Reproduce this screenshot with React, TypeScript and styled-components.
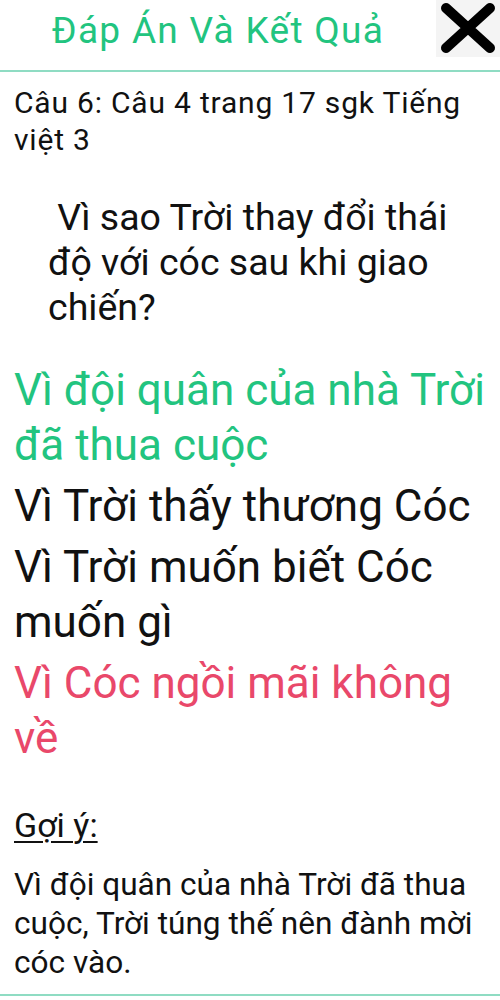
import React from "react";
import styled, { createGlobalStyle } from "styled-components";

const GlobalStyle = createGlobalStyle`
  html, body {
    margin: 0;
    padding: 0;
    background: #ffffff;
  }
  body {
    font-family: Roboto, "Liberation Sans", "Noto Sans", sans-serif;
    color: #111111;
  }
`;

const Page = styled.div`
  width: 500px;
  min-height: 1000px;
  display: flex;
  flex-direction: column;
  background: #ffffff;
`;

const Header = styled.header`
  height: 70px;
  display: flex;
  align-items: flex-start;
  border-bottom: 2px solid #8fdcc3;
`;

const Title = styled.h1`
  flex: 1;
  margin: 0;
  padding-top: 9px;
  text-align: center;
  font-size: 37px;
  line-height: 44px;
  font-weight: 400;
  letter-spacing: 1.3px;
  color: #22c47f;
`;

const CloseButton = styled.button`
  width: 64px;
  height: 57px;
  padding: 0;
  border: none;
  background: #f4f4f4;
  display: flex;
  align-items: center;
  justify-content: center;
  cursor: pointer;
`;

const Content = styled.main`
  display: flex;
  flex-direction: column;
  padding: 12px 8px 12px 14px;
  border-bottom: 2px solid #8fdcc3;
`;

const Source = styled.p`
  margin: 0;
  font-size: 30px;
  line-height: 37px;
  letter-spacing: 0.8px;
`;

const Question = styled.p`
  margin: 37px 0 0;
  padding: 0 24px 0 34px;
  font-size: 37.5px;
  line-height: 45px;
`;

const Answers = styled.ul`
  list-style: none;
  margin: 33px 0 0;
  padding: 0;
  display: flex;
  flex-direction: column;
  gap: 6px;
`;

const Answer = styled.li<{ $state?: "right" | "wrong" }>`
  font-size: 44px;
  line-height: 55px;
  color: ${({ $state }) =>
    $state === "right" ? "#22c47f" : $state === "wrong" ? "#e9486a" : "#111111"};
`;

const HintLabel = styled.h2`
  margin: 39px 0 0;
  font-size: 34px;
  line-height: 40px;
  font-weight: 400;
  text-decoration: underline;
  text-decoration-thickness: 2px;
  text-underline-offset: 4px;
`;

const HintText = styled.p`
  margin: 20px 0 0;
  font-size: 31.6px;
  line-height: 39px;
`;

const CloseIcon = () => (
  <svg width="64" height="57" viewBox="0 0 64 57">
    <path
      d="M10 8 L54 48 M54 8 L10 48"
      stroke="#000"
      strokeWidth="10"
      strokeLinecap="round"
    />
  </svg>
);

const answers: { text: string; state?: "right" | "wrong" }[] = [
  { text: "Vì đội quân của nhà Trời đã thua cuộc", state: "right" },
  { text: "Vì Trời thấy thương Cóc" },
  { text: "Vì Trời muốn biết Cóc muốn gì" },
  { text: "Vì Cóc ngồi mãi không về", state: "wrong" },
];

export default function App() {
  return (
    <Page>
      <GlobalStyle />
      <Header>
        <Title>Đáp Án Và Kết Quả</Title>
        <CloseButton aria-label="Đóng">
          <CloseIcon />
        </CloseButton>
      </Header>
      <Content>
        <Source>Câu 6: Câu 4 trang 17 sgk Tiếng việt 3</Source>
        <Question>{"\u00a0"}Vì sao Trời thay đổi thái độ với cóc sau khi giao chiến?</Question>
        <Answers>
          {answers.map((a) => (
            <Answer key={a.text} $state={a.state}>
              {a.text}
            </Answer>
          ))}
        </Answers>
        <HintLabel>Gợi ý:</HintLabel>
        <HintText>
          Vì đội quân của nhà Trời đã thua cuộc, Trời túng thế nên đành mời cóc vào.
        </HintText>
      </Content>
    </Page>
  );
}
